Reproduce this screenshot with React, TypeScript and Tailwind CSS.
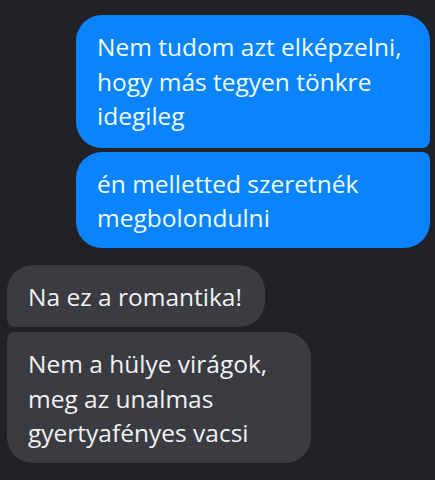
import React from 'react';

const font = { fontFamily: '"Open Sans", "Noto Sans", sans-serif' };

const App: React.FC = () => {
  return (
    <div className="w-[435px] h-[480px] bg-[#202228] overflow-hidden" style={font}>
      <div className="flex flex-col items-end pt-[15px] pr-[5px] gap-[4px]">
        <div className="w-[354px] bg-[#0b84fb] text-[#eefcff] text-[24.5px] leading-[34.5px] pl-[21px] pr-2 pt-[15px] pb-[14.5px] rounded-[26px] rounded-br-[8px] whitespace-nowrap">
          Nem tudom azt elképzelni,
          <br />
          hogy más tegyen tönkre
          <br />
          idegileg
        </div>
        <div className="w-[354px] bg-[#0b84fb] text-[#eefcff] text-[24.5px] leading-[34.5px] pl-[21px] pr-2 pt-[14.5px] pb-[12.5px] rounded-[26px] rounded-tr-[8px] whitespace-nowrap">
          én melletted szeretnék
          <br />
          megbolondulni
        </div>
      </div>

      <div className="flex flex-col items-start pl-[7px] mt-[17px] gap-[5px]">
        <div className="w-[258px] bg-[#3a3c42] text-[#f2f2f2] text-[24.5px] leading-[34.5px] pl-[21px] pr-2 pt-[15px] pb-[12.5px] rounded-[26px] rounded-bl-[8px] whitespace-nowrap">
          Na ez a romantika!
        </div>
        <div className="w-[304px] bg-[#3a3c42] text-[#f2f2f2] text-[24.5px] leading-[34.5px] pl-[21px] pr-2 pt-[15px] pb-[12.5px] rounded-[26px] rounded-tl-[8px] whitespace-nowrap">
          Nem a hülye virágok,
          <br />
          meg az unalmas
          <br />
          gyertyafényes vacsi
        </div>
      </div>
    </div>
  );
};

export default App;
